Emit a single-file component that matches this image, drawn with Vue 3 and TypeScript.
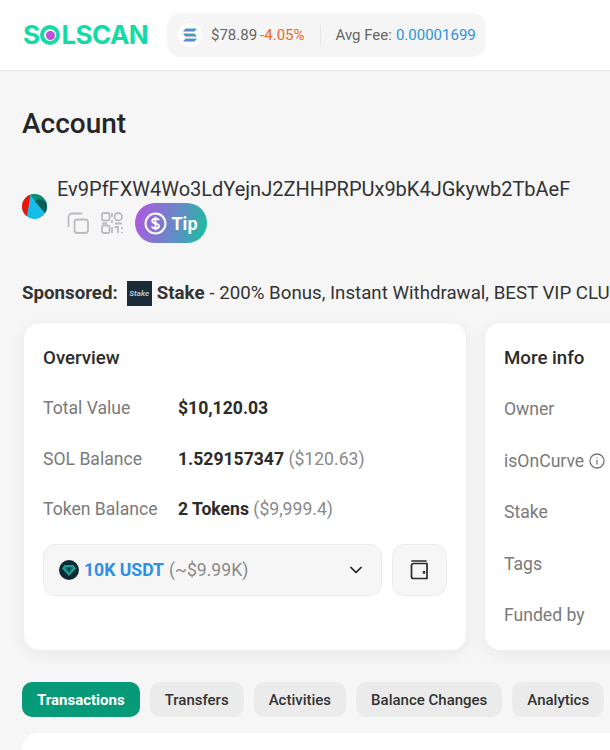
<template>
  <div class="page">
    <header class="topbar">
      <div class="logo">
        <span>S</span>
        <span class="logo-o"><i></i></span>
        <span>LSCAN</span>
      </div>
      <div class="market">
        <span class="sol-badge">
          <svg width="14" height="14" viewBox="0 0 16 15">
            <defs>
              <linearGradient id="solGrad" x1="0" y1="1" x2="0.2" y2="0">
                <stop offset="0" stop-color="#9a5fe0" />
                <stop offset="0.5" stop-color="#5b8bd0" />
                <stop offset="1" stop-color="#2fb59f" />
              </linearGradient>
            </defs>
            <path d="M2.8 0H16L13.2 3.4H0Z" fill="url(#solGrad)" />
            <path d="M0 5.8H13.2L16 9.2H2.8Z" fill="url(#solGrad)" />
            <path d="M2.8 11.6H16L13.2 15H0Z" fill="url(#solGrad)" />
          </svg>
        </span>
        <span class="price">$78.89</span>
        <span class="change">-4.05%</span>
        <span class="market-sep"></span>
        <span class="price">Avg Fee:</span>
        <span class="fee">0.00001699</span>
      </div>
    </header>

    <main class="content">
      <h1>Account</h1>

      <section class="address">
        <svg class="avatar" width="25" height="25" viewBox="0 0 26 26">
          <defs>
            <clipPath id="avatarClip"><circle cx="13" cy="13" r="13" /></clipPath>
          </defs>
          <g clip-path="url(#avatarClip)">
            <rect width="26" height="26" fill="#16bde8" />
            <path d="M0 0H9L5 24H0Z" fill="#ee1508" />
            <path d="M9 0H26V10L13 6L10 3Z" fill="#0d8c70" />
            <path d="M13 7L19 5L26 9V26L24 20Z" fill="#075f55" />
          </g>
        </svg>
        <div class="address-main">
          <div class="address-text">Ev9PfFXW4Wo3LdYejnJ2ZHHPRPUx9bK4JGkywb2TbAeF</div>
          <div class="address-actions">
            <svg width="22" height="22" viewBox="0 0 22 22" fill="none" stroke="#b9bcc0" stroke-width="1.8">
              <rect x="7.5" y="7.5" width="13.5" height="13.5" rx="3" />
              <path d="M14.5 1.5H5A3.5 3.5 0 0 0 1.5 5V14.5" stroke-linecap="round" />
            </svg>
            <svg class="qr" width="22" height="22" viewBox="0 0 22 22" fill="none" stroke="#b9bcc0" stroke-width="1.8">
              <rect x="1" y="1" width="7.5" height="7.5" rx="1.5" />
              <rect x="13.5" y="1" width="7.5" height="7.5" rx="3.7" />
              <rect x="1" y="13.5" width="7.5" height="7.5" rx="1.5" />
              <path d="M11 1V5M11 8V11M1 11.5H6M14 11.5H21M13.5 15H17V21M21 15V17M21 20V21M11 15V21" />
            </svg>
            <button class="tip">
              <svg width="23" height="23" viewBox="0 0 23 23" fill="none" stroke="#fff">
                <circle cx="11.5" cy="11.5" r="10" stroke-width="2" />
                <path d="M15 8.2C14.5 7 13.2 6.6 11.5 6.6C9.6 6.6 8.2 7.5 8.2 9C8.2 12.2 15 10.6 15 14C15 15.5 13.6 16.4 11.5 16.4C9.6 16.4 8.3 15.8 7.8 14.5M11.5 4.8V18.2" stroke-width="1.9" />
              </svg>
              Tip
            </button>
          </div>
        </div>
      </section>

      <div class="sponsored">
        <b>Sponsored:</b>
        <span class="stake-logo">Stake</span>
        <b>Stake</b>
        <span>- 200% Bonus, Instant Withdrawal, BEST VIP CLUB</span>
      </div>

      <div class="cards">
        <section class="card overview">
          <h2>Overview</h2>
          <div class="rows">
            <div class="row">
              <span class="label">Total Value</span>
              <b>$10,120.03</b>
            </div>
            <div class="row">
              <span class="label">SOL Balance</span>
              <span><b>1.529157347</b> <span class="muted">($120.63)</span></span>
            </div>
            <div class="row">
              <span class="label">Token Balance</span>
              <span><b>2 Tokens</b> <span class="muted">($9,999.4)</span></span>
            </div>
          </div>
          <div class="token-row">
            <div class="token-select">
              <svg width="20" height="20" viewBox="0 0 20 20">
                <circle cx="10" cy="10" r="10" fill="#0f2a33" />
                <path d="M5.5 5H14.5L17 8.5L10 16L3 8.5Z" fill="#1c9c94" />
                <path d="M6.5 8H13.5M10 8V12.5M7.5 10H12.5" stroke="#0f2a33" stroke-width="1.2" fill="none" />
              </svg>
              <span class="token-name">10K USDT</span>
              <span class="muted">(~$9.99K)</span>
              <svg class="chevron" width="14" height="9" viewBox="0 0 14 9" fill="none" stroke="#222" stroke-width="1.7">
                <path d="M2 1.5L7 6.5L12 1.5" stroke-linecap="round" stroke-linejoin="round" />
              </svg>
            </div>
            <button class="wallet">
              <svg width="20" height="20" viewBox="0 0 20 20" fill="none" stroke="#2b2b2b" stroke-width="1.7">
                <path d="M1.5 5.5A2 2 0 0 1 3.5 3.5H17V18.5H3.5A2 2 0 0 1 1.5 16.5Z" stroke-linejoin="round" />
                <path d="M2 1H16" stroke-linecap="round" />
                <circle cx="14" cy="12.5" r="0.6" fill="#2b2b2b" />
              </svg>
            </button>
          </div>
        </section>

        <section class="card more">
          <h2>More info</h2>
          <div class="more-rows">
            <span class="label">Owner</span>
            <span class="label curve">
              isOnCurve
              <svg width="16" height="16" viewBox="0 0 16 16" fill="none" stroke="#777" stroke-width="1.3">
                <circle cx="8" cy="8" r="7" />
                <path d="M8 7V11.5M8 4.4V5.6" />
              </svg>
            </span>
            <span class="label">Stake</span>
            <span class="label">Tags</span>
            <span class="label">Funded by</span>
          </div>
        </section>
      </div>

      <nav class="tabs">
        <button v-for="tab in tabs" :key="tab" :class="{ active: tab === 'Transactions' }">{{ tab }}</button>
      </nav>

      <div class="table-card"></div>
    </main>
  </div>
</template>

<script setup lang="ts">
const tabs: string[] = ['Transactions', 'Transfers', 'Activities', 'Balance Changes', 'Analytics']
</script>

<style>
html,
body {
  margin: 0;
  overflow: hidden;
}
</style>

<style scoped>
.page {
  width: 610px;
  height: 750px;
  overflow: hidden;
  background: #f6f6f6;
  color: #2b2b2b;
  font-family: Roboto, "Liberation Sans", sans-serif;
}

.topbar {
  height: 70px;
  background: #fff;
  border-bottom: 1px solid #e6e6e6;
  display: flex;
  align-items: center;
  padding-left: 23px;
  gap: 20px;
}

.logo {
  width: 124px;
  display: flex;
  align-items: center;
  font-family: Inter, Lato, sans-serif;
  font-size: 26px;
  font-weight: 700;
  letter-spacing: -0.6px;
  color: #14dba6;
  line-height: 1;
}

.logo-o {
  width: 20px;
  height: 20px;
  box-sizing: border-box;
  border: 4px solid #14dba6;
  border-radius: 50%;
  display: flex;
  align-items: center;
  justify-content: center;
  margin: 0 1px;
  flex: none;
}

.logo-o i {
  width: 9px;
  height: 9px;
  border-radius: 50%;
  background: #c04fdc;
}

.market {
  height: 44px;
  width: 319px;
  box-sizing: border-box;
  background: #f5f5f5;
  border-radius: 14px;
  display: flex;
  align-items: center;
  padding-left: 11px;
  font-size: 15px;
}

.sol-badge {
  width: 24px;
  height: 24px;
  background: #fff;
  border-radius: 50%;
  display: flex;
  align-items: center;
  justify-content: center;
  margin-right: 9px;
}

.price {
  color: #666;
}

.change {
  color: #ee6a25;
  margin-left: 3px;
}

.market-sep {
  width: 1px;
  height: 20px;
  background: #e6e6e6;
  margin: 0 15px;
}

.fee {
  color: #2f93e0;
  margin-left: 4px;
}

.content {
  padding: 0 0 0 22px;
}

h1 {
  margin: 35px 0 0;
  font-size: 28px;
  font-weight: 500;
  line-height: 36px;
  color: #262626;
}

.address {
  margin-top: 34px;
  display: flex;
  align-items: center;
  gap: 9px;
}

.avatar {
  flex: none;
  margin-bottom: 7px;
  margin-right: 1px;
}

.address-main {
  display: flex;
  flex-direction: column;
}

.address-text {
  font-size: 20px;
  line-height: 26px;
  white-space: nowrap;
  color: #333;
}

.address-actions {
  display: flex;
  align-items: center;
  margin-top: 1px;
  padding-left: 10px;
}

.qr {
  margin-left: 12px;
}

.tip {
  margin-left: 12px;
  width: 72px;
  height: 40px;
  border: none;
  border-radius: 20px;
  background: linear-gradient(105deg, #b455e4, #5f8fc4 60%, #12c39a);
  color: #fff;
  font-family: inherit;
  font-size: 18px;
  font-weight: 700;
  display: flex;
  align-items: center;
  justify-content: center;
  gap: 4px;
  padding: 0;
}

.sponsored {
  margin-top: 37px;
  height: 26px;
  display: flex;
  align-items: center;
  gap: 5px;
  font-size: 18.7px;
  white-space: nowrap;
  color: #333;
}

.stake-logo {
  width: 25px;
  height: 25px;
  flex: none;
  margin-left: 4px;
  background: #1a2c38;
  color: #b8c2c8;
  font-size: 8px;
  font-style: italic;
  font-weight: 700;
  display: flex;
  align-items: center;
  justify-content: center;
}

.cards {
  margin-top: 16px;
  display: flex;
  gap: 17px;
  padding-left: 1px;
}

.card {
  flex: none;
  height: 329px;
  box-sizing: border-box;
  background: #fff;
  border: 1px solid #efefef;
  border-radius: 16px;
  box-shadow: 0 4px 16px rgba(0, 0, 0, 0.05);
  padding: 22px 19px;
}

.overview {
  width: 444px;
}

.more {
  width: 400px;
}

h2 {
  margin: 0;
  font-size: 18.7px;
  font-weight: 500;
  line-height: 26px;
  color: #2b2b2b;
}

.rows {
  margin-top: 24px;
  display: flex;
  flex-direction: column;
  gap: 24.5px;
  font-size: 17.6px;
}

.row {
  display: flex;
  align-items: center;
  height: 26px;
}

.row b {
  font-weight: 700;
  color: #2b2b2b;
}

.label {
  color: #7a7a7a;
  font-size: 17.6px;
}

.row .label {
  width: 135px;
  flex: none;
}

.muted {
  color: #8a8a8a;
}

.token-row {
  margin-top: 22px;
  display: flex;
  gap: 10px;
}

.token-select {
  flex: 1;
  height: 52px;
  box-sizing: border-box;
  border: 1px solid #ececec;
  border-radius: 12px;
  background: #f6f6f6;
  display: flex;
  align-items: center;
  padding: 0 18px 0 15px;
  font-size: 17.6px;
  gap: 5px;
}

.token-name {
  color: #2f8fe6;
  font-weight: 700;
}

.chevron {
  margin-left: auto;
}

.wallet {
  width: 55px;
  height: 52px;
  box-sizing: border-box;
  border: 1px solid #ececec;
  border-radius: 12px;
  background: #f6f6f6;
  display: flex;
  align-items: center;
  justify-content: center;
  padding: 0;
}

.more-rows {
  margin-top: 25px;
  display: flex;
  flex-direction: column;
  gap: 25.6px;
}

.more-rows .label {
  line-height: 26px;
  display: flex;
  align-items: center;
  gap: 5px;
}

.tabs {
  margin-top: 31px;
  display: flex;
  gap: 10px;
}

.tabs button {
  flex: none;
  height: 35px;
  border: none;
  border-radius: 10px;
  background: #ebebeb;
  color: #333;
  font-family: inherit;
  font-size: 15px;
  font-weight: 500;
  padding: 0 15px;
  white-space: nowrap;
}

.tabs button.active {
  background: #079a78;
  color: #fff;
  font-weight: 700;
}

.table-card {
  margin-top: 16px;
  height: 200px;
  background: #fff;
  border-radius: 16px 0 0 0;
  width: 600px;
}
</style>
